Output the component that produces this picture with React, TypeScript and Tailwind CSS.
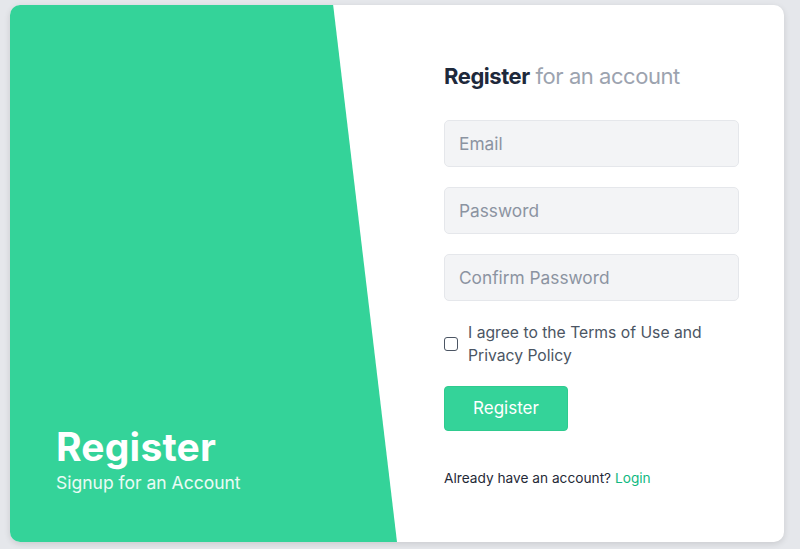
import React from "react";

export default function App() {
  return (
    <div
      className="w-[800px] h-[549px] bg-[#e5e7eb] pt-[5px] pl-[10px]"
      style={{ fontFamily: "Inter, 'Noto Sans', sans-serif" }}
    >
      <div className="w-[774px] h-[537px] bg-white rounded-[10px] shadow-[0_2px_6px_rgba(0,0,0,0.12)] flex overflow-hidden">
        <div className="w-[387px] h-full bg-[#34d399] [clip-path:polygon(0_0,83.5%_0,100%_100%,0_100%)] flex flex-col justify-end pl-[46px] pb-[47px]">
          <h1 className="text-[39px] leading-[44px] font-bold text-white tracking-[0.2px] mb-[2px]">Register</h1>
          <p className="text-[17.5px] leading-[24px] text-white/90">Signup for an Account</p>
        </div>
        <div className="flex-1 pl-[47px] pr-[45px] pt-[57px] flex flex-col">
          <h2 className="text-[22px] leading-[28px] text-[#9ca3af] tracking-[-0.45px]">
            <span className="font-bold text-[#1e293b]">Register</span> for an account
          </h2>
          <div className="mt-[30px] flex flex-col gap-[20px]">
            {["Email", "Password", "Confirm Password"].map((p) => (
              <input
                key={p}
                placeholder={p}
                className="h-[47px] w-full rounded-[5px] bg-[#f3f4f6] border border-[#e5e7eb] pl-[14px] text-[17.3px] placeholder:text-[#8b93a1] outline-none"
              />
            ))}
          </div>
          <label className="mt-[20px] flex items-center gap-[10px] text-[15.7px] leading-[23px] text-[#4b5563]">
            <span className="w-[14px] h-[14px] rounded-[3px] border border-[#4b5563] shrink-0" />
            <span>
              I agree to the Terms of Use and
              <br />
              Privacy Policy
            </span>
          </label>
          <button className="mt-[19px] w-[124px] h-[45px] rounded-[4px] bg-[#34d399] text-white text-[17px] border border-[#2fcb8f]">
            Register
          </button>
          <p className="mt-[37px] text-[13.7px] leading-[20px] text-[#1f2937]">
            Already have an account? <span className="text-[#10b981]">Login</span>
          </p>
        </div>
      </div>
    </div>
  );
}
